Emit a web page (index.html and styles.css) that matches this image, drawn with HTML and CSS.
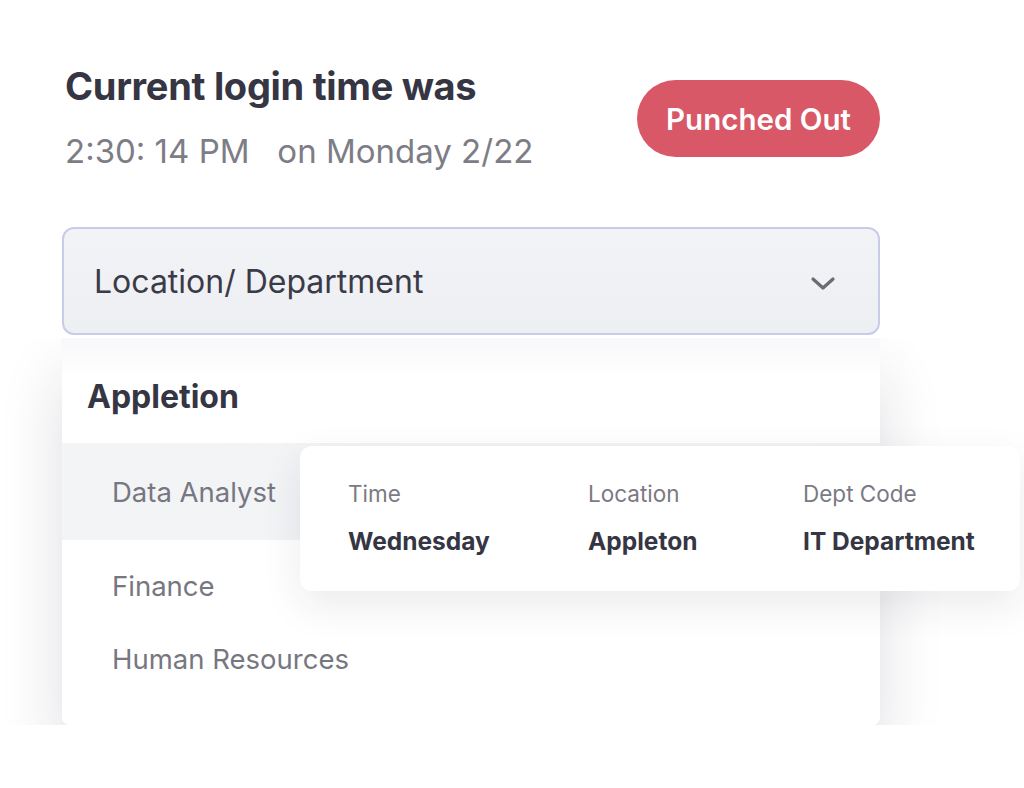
FILE: index.html
```html
<!DOCTYPE html>
<html lang="en">
<head>
  <meta charset="UTF-8">
  <title>Punch Clock</title>
  <meta name="viewport" content="width=device-width, initial-scale=1.0">
  <link rel="stylesheet" href="styles.css">
</head>
<body>

  <div class="clock">
    <div class="login-row">
      <div class="login-info">
        <h1>Current login time was</h1>
        <p class="login-time">2:30: 14 PM &nbsp; on Monday 2/22</p>
      </div>
      <button class="punch-btn">Punched Out</button>
    </div>

    <div class="select">
      <span>Location/ Department</span>
      <svg class="chevron" width="26" height="16" viewBox="0 0 26 16">
        <path d="M3 3 L13 12 L23 3" fill="none" stroke="#6b6b74" stroke-width="3.2" stroke-linecap="round" stroke-linejoin="round"/>
      </svg>
    </div>

    <div class="panel">
      <div class="panel-head">Appletion</div>
      <div class="panel-row active">Data Analyst</div>
      <div class="panel-list">
        <div class="panel-row">Finance</div>
        <div class="panel-row">Human Resources</div>
      </div>

      <div class="info-card">
        <div class="info-col col-time">
          <span class="info-label">Time</span>
          <span class="info-value">Wednesday</span>
        </div>
        <div class="info-col col-loc">
          <span class="info-label">Location</span>
          <span class="info-value">Appleton</span>
        </div>
        <div class="info-col">
          <span class="info-label">Dept Code</span>
          <span class="info-value">IT Department</span>
        </div>
      </div>
    </div>
  </div>

</body>
</html>
```

FILE: styles.css
```css
body {
  margin: 0;
  background: #fff;
  font-family: Inter, "Noto Sans", sans-serif;
  color: #353543;
  overflow: hidden;
}

.clock {
  width: 818px;
  padding: 64px 0 0 62px;
}

.login-row {
  display: flex;
  justify-content: space-between;
  align-items: center;
}

.login-info {
  padding-left: 3px;
}

h1 {
  margin: 0;
  font-size: 38px;
  line-height: 44px;
  font-weight: 700;
  color: #353543;
  letter-spacing: -0.3px;
}

.login-time {
  margin: 23px 0 0;
  font-size: 33px;
  line-height: 40px;
  font-weight: 400;
  color: #7d7d86;
}

.punch-btn {
  width: 243px;
  height: 77px;
  margin-top: 2px;
  border: none;
  border-radius: 40px;
  background: #d95867;
  color: #fff;
  font-family: inherit;
  font-size: 29.5px;
  font-weight: 600;
}

.select {
  margin-top: 56px;
  height: 104px;
  border: 2px solid #c8cbea;
  border-radius: 12px;
  background: linear-gradient(#f2f3f6, #eeeff2);
  display: flex;
  align-items: center;
  justify-content: space-between;
  padding: 0 42px 0 30px;
  font-size: 32px;
  color: #3b3b47;
}

.chevron {
  margin-top: 6px;
}

.panel {
  position: relative;
  margin-top: 3px;
  height: 387px;
  background: #fff;
  border-radius: 0 0 8px 8px;
}

.panel::before {
  content: "";
  position: absolute;
  inset: 0;
  border-radius: 0 0 8px 8px;
  box-shadow: 0 36px 64px rgba(30, 30, 60, 0.14);
  clip-path: inset(0 -60px -120px -80px);
  z-index: -1;
}

.panel-head {
  height: 105px;
  box-sizing: border-box;
  padding: 12px 0 0 25px;
  display: flex;
  align-items: center;
  font-size: 32px;
  font-weight: 700;
  color: #353543;
  background: linear-gradient(#f8f8fa, #fff 40%);
}

.panel-row {
  display: flex;
  align-items: center;
  padding-left: 50px;
  font-size: 27.5px;
  line-height: 40px;
  color: #777781;
}

.panel-row.active {
  height: 97px;
  background: linear-gradient(90deg, #f3f4f6, #f1f2f5);
}

.panel-list {
  display: flex;
  flex-direction: column;
  gap: 33px;
  padding-top: 26px;
}

.info-card {
  position: absolute;
  left: 238px;
  top: 108px;
  width: 720px;
  height: 145px;
  padding-left: 48px;
  box-sizing: border-box;
  background: #fff;
  border-radius: 12px;
  box-shadow: 0 14px 40px rgba(30, 30, 60, 0.09);
  display: flex;
  align-items: center;
}

.info-col {
  display: flex;
  flex-direction: column;
  gap: 17px;
}

.col-time {
  width: 240px;
}

.col-loc {
  width: 215px;
}

.info-label {
  font-size: 22.5px;
  line-height: 28px;
  color: #7a7a84;
}

.info-value {
  font-size: 24.5px;
  line-height: 32px;
  font-weight: 700;
  color: #353543;
}
```
